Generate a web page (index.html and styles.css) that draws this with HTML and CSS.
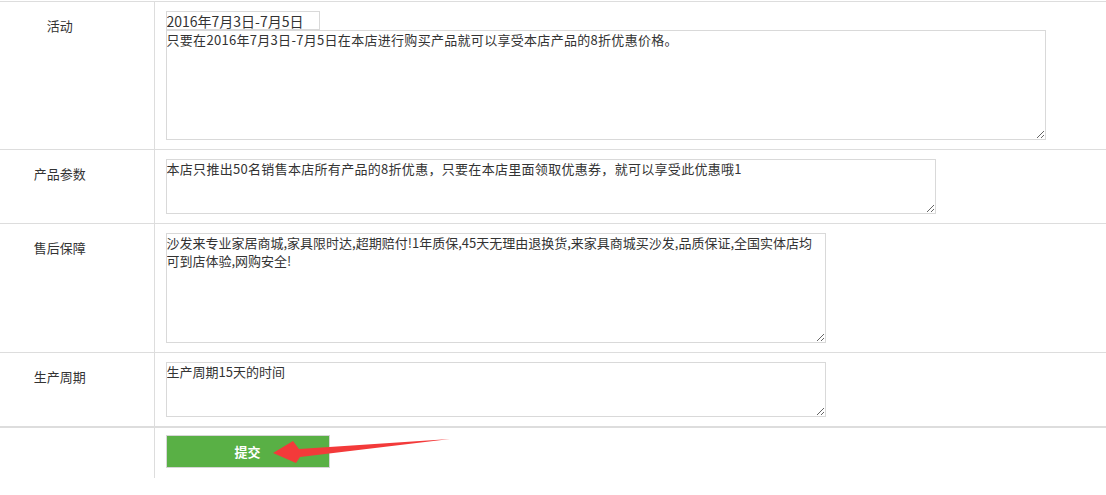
FILE: index.html
```html
<!DOCTYPE html>
<html>
	<head>
		<meta charset="UTF-8">
		<title></title>
		<link rel="stylesheet" href="styles.css">
	</head>
	<body>
		<section id="box">
			<table class="form">
				<tr>
					<td class="label">活动</td>
					<td class="field">
						<input class="date" type="text" value="2016年7月3日-7月5日" />
						<textarea class="big w880">只要在2016年7月3日-7月5日在本店进行购买产品就可以享受本店产品的8折优惠价格。</textarea>
					</td>
				</tr>
				<tr>
					<td class="label">产品参数</td>
					<td class="field">
						<textarea class="small w770">本店只推出50名销售本店所有产品的8折优惠，只要在本店里面领取优惠券，就可以享受此优惠哦1</textarea>
					</td>
				</tr>
				<tr>
					<td class="label">售后保障</td>
					<td class="field">
						<textarea class="big w660">沙发来专业家居商城,家具限时达,超期赔付!1年质保,45天无理由退换货,来家具商城买沙发,品质保证,全国实体店均可到店体验,网购安全!</textarea>
					</td>
				</tr>
				<tr class="last">
					<td class="label">生产周期</td>
					<td class="field">
						<textarea class="small w660">生产周期15天的时间</textarea>
					</td>
				</tr>
				<tr class="submit">
					<td class="label"></td>
					<td class="field">
						<button class="btn" type="button">提交</button>
					</td>
				</tr>
			</table>
			<!-- 红色箭头标注 -->
			<svg class="arrow" width="190" height="32" viewBox="0 0 190 32">
				<polygon points="3,17 23,5 29,13 180,3 30,21 26,27" fill="#f33a3a" />
			</svg>
		</section>
	</body>
</html>
```

FILE: styles.css
```css
	body{
		margin:0;
		background:#fff;
		font-family:"Microsoft YaHei","Noto Sans CJK SC",sans-serif;
		color:#333;
	}
	#box{
		position: relative;
		padding-top:1px;
	}
	.form{
		width:100%;
		border-collapse:collapse;
	}
	.form td{
		border-top:1px solid #ddd;
		vertical-align:top;
		padding:0;
	}
	.form .label{
		width:154px;
		box-sizing:border-box;
		border-right:1px solid #ddd;
		padding:15px 34px 0 0;
		text-align:center;
		font-size:13px;
		line-height:18px;
	}
	.form .field{
		padding:9px 0 9px 11px;
	}
	.form .field textarea,.form .field input{
		display:block;
		box-sizing:border-box;
		margin:0;
		padding:0;
		border:1px solid #d9d9d9;
		font-family:"Microsoft YaHei","Noto Sans CJK SC",sans-serif;
		color:#333;
		outline:none;
	}
	.date{
		width:154px;
		height:19px;
		font-size:14px;
		line-height:17px;
		color:#222;
	}
	textarea{
		font-size:13px;
		line-height:18px;
		letter-spacing:0.3px;
	}
	.big{height:110px;}
	.small{height:55px;}
	.w880{width:880px;}
	.w770{width:770px;}
	.w660{width:660px;letter-spacing:0;}

	.submit td{
		border-top:2px solid #ddd;
	}
	.submit .field{
		padding:7px 0 10px 11px;
	}
	.btn{
		display:block;
		width:164px;
		height:33px;
		margin:0;
		background:#59b045;
		border:1px solid #d6d6d6;
		color:#fff;
		font-family:"Microsoft YaHei","Noto Sans CJK SC",sans-serif;
		font-size:13px;
		font-weight:bold;
		cursor: pointer;
	}
	.arrow{
		position:absolute;
		left:270px;
		top:436px;
	}
```
